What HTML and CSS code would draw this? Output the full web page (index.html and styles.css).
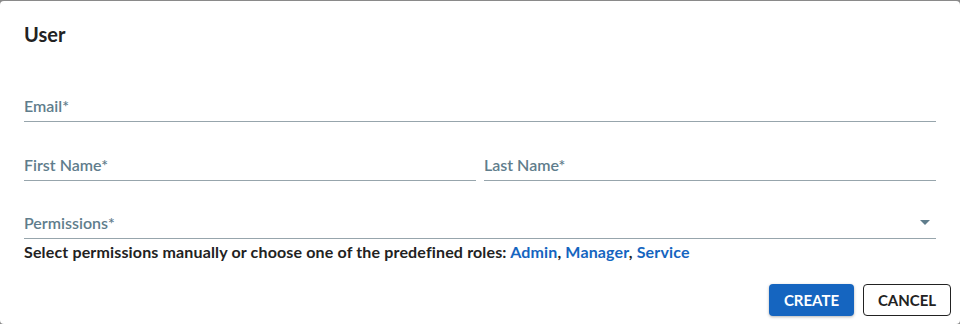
FILE: index.html
```html
<!DOCTYPE html>
<html>
<head>
  <title>User</title>
  <link rel="stylesheet" href="styles.css">
</head>
<body>
  <div class="dialog">
    <h2 class="dialog-title">User</h2>

    <div class="dialog-content">
      <div class="field">
        <label class="field-label">Email*</label>
      </div>

      <div class="row">
        <div class="field">
          <label class="field-label">First Name*</label>
        </div>
        <div class="field">
          <label class="field-label">Last Name*</label>
        </div>
      </div>

      <div class="field select">
        <label class="field-label">Permissions*</label>
        <svg class="arrow" width="10" height="5" viewBox="0 0 10 5">
          <path d="M0 0 L10 0 L5 5 Z" fill="#5f7d8c"/>
        </svg>
      </div>
      <div class="helper">
        Select permissions manually or choose one of the predefined roles:
        <a href="#">Admin</a>, <a href="#">Manager</a>, <a href="#">Service</a>
      </div>
    </div>

    <div class="dialog-actions">
      <button class="create-btn">Create</button>
      <button class="cancel-btn">Cancel</button>
    </div>
  </div>
</body>
</html>
```

FILE: styles.css
```css
body {
  font-family: Lato, "Open Sans", sans-serif;
  background-color: #8a8a8a;
  margin: 0;
  padding: 1px 0 0 0;
}

.dialog {
  background-color: #fff;
  border-radius: 4px;
  height: 323px;
  box-sizing: border-box;
  display: flex;
  flex-direction: column;
}

.dialog-title {
  margin: 0;
  padding: 21px 24px 0 24px;
  font-size: 20px;
  font-weight: 700;
  color: #222;
  line-height: 24px;
}

.dialog-content {
  padding: 0 24px;
  margin-top: 50px;
}

.row {
  display: flex;
  gap: 8px;
  margin-top: 33px;
}

.row .field {
  flex: 1;
}

.field {
  position: relative;
  border-bottom: 1px solid #97a5ac;
  padding-bottom: 6px;
}

.field-label {
  display: block;
  font-size: 16px;
  font-weight: 600;
  color: #5f7d8c;
  line-height: 19px;
}

.select {
  margin-top: 32px;
}

.arrow {
  position: absolute;
  right: 6px;
  top: 7px;
}

.helper {
  margin-top: 3px;
  font-size: 16px;
  font-weight: 700;
  letter-spacing: 0.15px;
  color: #222;
  line-height: 19px;
}

.helper a {
  color: #1565c0;
  text-decoration: none;
}

.dialog-actions {
  display: flex;
  justify-content: flex-end;
  gap: 9px;
  padding: 0 9px 0 0;
  margin-top: auto;
  margin-bottom: 8px;
}

button {
  height: 32px;
  font-family: Lato, "Open Sans", sans-serif;
  font-size: 15px;
  font-weight: 700;
  text-transform: uppercase;
  border-radius: 4px;
  cursor: pointer;
}

button.create-btn {
  width: 85px;
  background-color: #1565c0;
  color: #fff;
  border: none;
  box-shadow: 0 1px 3px rgba(0, 0, 0, 0.3);
}

button.cancel-btn {
  width: 88px;
  background-color: #fff;
  color: #222;
  border: 1px solid #222;
}
```
